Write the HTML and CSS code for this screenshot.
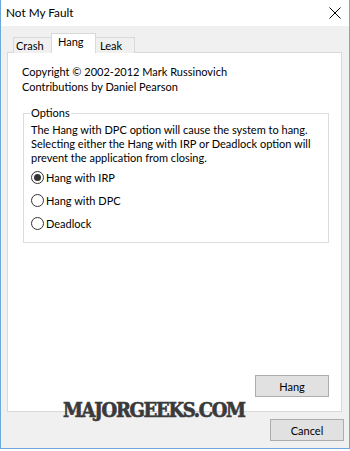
FILE: index.html
```html
<!DOCTYPE html>
<html>
<head>
<meta charset="utf-8">
<link rel="stylesheet" href="styles.css">
</head>
<body>
<div class="window">
  <div class="titlebar">
    <span class="title">Not My Fault</span>
    <svg class="close" width="12" height="12" viewBox="0 0 12 12"><path d="M0.5 0.5 L11.5 11.5 M11.5 0.5 L0.5 11.5" stroke="#000" stroke-width="1" fill="none"/></svg>
  </div>
  <div class="client">
    <div class="tabs">
      <div class="tab tab-crash">Crash</div>
      <div class="tab tab-hang active">Hang</div>
      <div class="tab tab-leak">Leak</div>
    </div>
    <div class="panel">
      <div class="copy">Copyright © 2002-2012 Mark Russinovich</div>
      <div class="copy">Contributions by Daniel Pearson</div>
      <fieldset class="group">
        <legend>Options</legend>
        <p class="desc">The Hang with DPC option will cause the system to hang.<br>Selecting either the Hang with IRP or Deadlock option will<br>prevent the application from closing.</p>
        <div class="radio"><span class="circle checked"></span><span>Hang with IRP</span></div>
        <div class="radio"><span class="circle"></span><span>Hang with DPC</span></div>
        <div class="radio"><span class="circle"></span><span>Deadlock</span></div>
      </fieldset>
      <div class="btnrow"><div class="btn">Hang</div></div>
    </div>
    <div class="btnrow bottom"><div class="btn">Cancel</div></div>
    <div class="watermark">MAJORGEEKS.COM</div>
  </div>
</div>
</body>
</html>
```
FILE: styles.css
```css
html, body {
  margin: 0;
  padding: 0;
  background: #ffffff;
}
body {
  font-family: Lato, "Noto Sans", sans-serif;
  font-size: 11px;
  color: #000;
}
.window {
  width: 350px;
  height: 449px;
  box-sizing: border-box;
  border: 1px solid #6fa6dc;
  border-top: none;
  display: flex;
  flex-direction: column;
}
.titlebar {
  height: 26px;
  background: #fff;
  display: flex;
  align-items: center;
  justify-content: space-between;
  padding: 0 8px 0 5px;
  flex: none;
}
.title {
  font-size: 11.8px;
  position: relative;
  top: -1px;
}
.close {
  display: block;
}
.client {
  flex: 1;
  background: #f0f0f0;
  padding: 8px 7px 0 6px;
  display: flex;
  flex-direction: column;
  position: relative;
}
.tabs {
  height: 19px;
  display: flex;
  align-items: flex-end;
  padding-left: 6px;
  position: relative;
  z-index: 1;
  margin-bottom: -1px;
}
.tab {
  box-sizing: border-box;
  height: 16px;
  border: 1px solid #d9d9d9;
  border-bottom: none;
  background: #f0f0f0;
  line-height: 15px;
}
.tab-crash { width: 38px; padding-left: 2px; border-right: none; }
.tab-hang { width: 45px; padding-left: 6px; }
.tab-leak { width: 39px; padding-left: 4px; border-left: none; }
.tab.active {
  height: 20px;
  background: #fff;
  line-height: 16px;
}
.panel {
  height: 360px;
  box-sizing: border-box;
  background: #fff;
  border: 1px solid #d9d9d9;
  padding: 11px 12px 0 14px;
  display: flex;
  flex-direction: column;
}
.copy {
  line-height: 15px;
}
.group {
  margin: 12px 0 0 1px;
  border: 1px solid #dcdcdc;
  padding: 3px 6px 7px 7px;
  min-width: 0;
}
.group legend {
  padding: 0 1px;
  margin-left: -1px;
  line-height: 14px;
}
.desc {
  margin: 0 0 1px 0;
  line-height: 14px;
  white-space: nowrap;
}
.radio {
  height: 23px;
  display: flex;
  align-items: center;
  gap: 2px;
}
.circle {
  width: 13px;
  height: 13px;
  box-sizing: border-box;
  border: 1px solid #333;
  border-radius: 50%;
  display: flex;
  align-items: center;
  justify-content: center;
  flex: none;
}
.circle.checked::after {
  content: "";
  width: 7px;
  height: 7px;
  border-radius: 50%;
  background: #333;
}
.btnrow {
  display: flex;
  justify-content: flex-end;
  margin-top: auto;
  margin-bottom: 14px;
  margin-right: 0;
}
.btn {
  width: 74px;
  height: 22px;
  box-sizing: border-box;
  background: #e1e1e1;
  border: 1px solid #adadad;
  display: flex;
  align-items: center;
  justify-content: center;
}
.btnrow.bottom {
  margin: 7px -2px 0 0;
}
.watermark {
  position: absolute;
  left: 62px;
  top: 372px;
  font-family: "DejaVu Serif Condensed", "DejaVu Serif", serif;
  font-weight: bold;
  font-size: 20px;
  color: #3a3a3a;
  letter-spacing: -1.3px;
  z-index: 2;
  -webkit-text-stroke: 0.6px #3a3a3a;
}
```
